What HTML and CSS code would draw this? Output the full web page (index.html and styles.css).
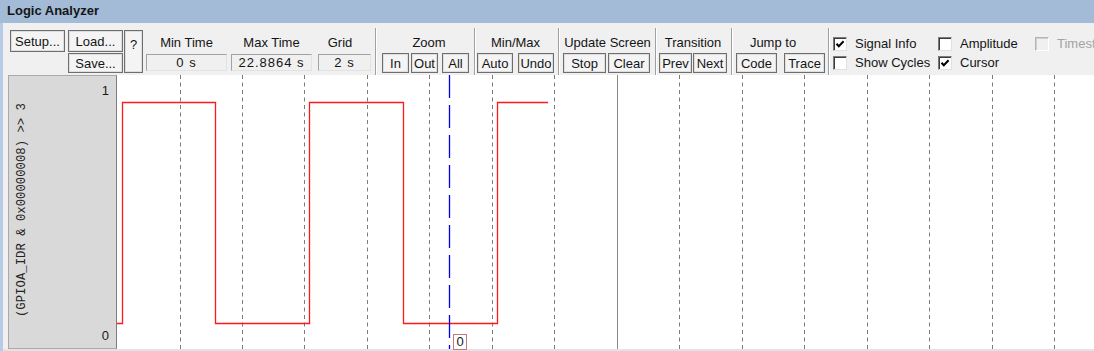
FILE: index.html
```html
<!DOCTYPE html>
<html>
<head>
<meta charset="utf-8">
<title>Logic Analyzer</title>
<link rel="stylesheet" href="styles.css">
</head>
<body>
<div class="window">
  <div class="titlebar">Logic Analyzer</div>
  <div class="frame">
    <div class="toolbar">
      <div class="file-group">
        <button class="btn setup">Setup...</button>
        <button class="btn load">Load...</button>
        <button class="btn save">Save...</button>
        <button class="btn help">?</button>
      </div>
      <div class="field f-min"><div class="lbl">Min Time</div><div class="val">0 s</div></div>
      <div class="field f-max"><div class="lbl">Max Time</div><div class="val">22.8864 s</div></div>
      <div class="field f-grid"><div class="lbl">Grid</div><div class="val">2 s</div></div>
      <div class="sep s1"></div>
      <div class="group g-zoom">
        <div class="lbl">Zoom</div>
        <div class="btns"><button class="btn b-in">In</button><button class="btn b-out">Out</button><button class="btn b-all">All</button></div>
      </div>
      <div class="sep s2"></div>
      <div class="group g-minmax">
        <div class="lbl">Min/Max</div>
        <div class="btns"><button class="btn b-auto">Auto</button><button class="btn b-undo">Undo</button></div>
      </div>
      <div class="sep s3"></div>
      <div class="group g-update">
        <div class="lbl">Update Screen</div>
        <div class="btns"><button class="btn b-stop">Stop</button><button class="btn b-clear">Clear</button></div>
      </div>
      <div class="sep s4"></div>
      <div class="group g-trans">
        <div class="lbl">Transition</div>
        <div class="btns"><button class="btn b-prev">Prev</button><button class="btn b-next">Next</button></div>
      </div>
      <div class="sep s5"></div>
      <div class="group g-jump">
        <div class="lbl">Jump to</div>
        <div class="btns"><button class="btn b-code">Code</button><button class="btn b-trace">Trace</button></div>
      </div>
      <div class="sep s6"></div>
      <div class="checks">
        <label class="chk"><span class="box"><svg viewBox="0 0 12 12" width="12" height="12"><path d="M2.5 5.8 L4.8 8.3 L9.6 3.2" fill="none" stroke="#000" stroke-width="2"/></svg></span>Signal Info</label>
        <label class="chk"><span class="box"></span>Amplitude</label>
        <label class="chk disabled"><span class="box"></span>Timestamps</label>
        <label class="chk"><span class="box"></span>Show Cycles</label>
        <label class="chk"><span class="box"><svg viewBox="0 0 12 12" width="12" height="12"><path d="M2.5 5.8 L4.8 8.3 L9.6 3.2" fill="none" stroke="#000" stroke-width="2"/></svg></span>Cursor</label>
      </div>
    </div>
    <div class="plotrow">
      <div class="signal">
        <div class="signame">(GPIOA_IDR &amp; 0x00000008) &gt;&gt; 3</div>
        <div class="levels"><span>1</span><span>0</span></div>
      </div>
      <div class="plot">
        <svg class="wave" width="977" height="274" viewBox="0 0 977 274">
          <path d="M63.5 0V274M125.5 0V274M187.5 0V274M250.5 0V274M312.5 0V274M375.5 0V274M437.5 0V274M562.5 0V274M625.5 0V274M687.5 0V274M750.5 0V274M812.5 0V274M875.5 0V274M937.5 0V274" stroke="#7c7c7c" stroke-width="1" stroke-dasharray="4 3.5" fill="none"/>
          <path d="M500.5 0V274" stroke="#8a8a8a" stroke-width="1" fill="none"/>
          <path d="M0 248.5H5.5V27.5H98.5V248.5H192.5V27.5H286.5V248.5H380.5V27.5H431" stroke="#ff1a1a" stroke-width="1.3" fill="none"/>
          <path d="M332.5 0V274" stroke="#0000ee" stroke-width="1.3" stroke-dasharray="23 7" fill="none"/>
        </svg>
        <div class="cursor-tag">0</div>
      </div>
    </div>
  </div>
</div>
</body>
</html>
```
FILE: styles.css
```css
html, body {
  margin: 0;
  padding: 0;
}
body {
  width: 1094px;
  height: 351px;
  overflow: hidden;
  font-family: "Liberation Sans", Arial, sans-serif;
  font-size: 13px;
  color: #141414;
  background: #f0f0f0;
}
.titlebar {
  height: 23px;
  box-sizing: border-box;
  padding-left: 7px;
  background: #a3bbd6;
  font-weight: bold;
  line-height: 22px;
  color: #151515;
}
.frame {
  border-left: 3px solid #b6cce6;
  background: #f0f0f0;
}
.toolbar {
  display: flex;
  height: 52px;
  box-sizing: border-box;
  padding: 7px 0 0 7px;
  white-space: nowrap;
  overflow: hidden;
}
.toolbar > * { flex-shrink: 0; }
.btn {
  font: inherit;
  color: #141414;
  background: #f4f4f4;
  border: 1px solid #6e6e6e;
  box-shadow: inset 0 0 0 1px #dedede;
  padding: 0;
  margin: 0;
  height: 20px;
  box-sizing: border-box;
  display: flex;
  align-items: center;
  justify-content: center;
  line-height: 1;
  white-space: nowrap;
  flex-shrink: 0;
}
.file-group {
  display: grid;
  grid-template-columns: 58px 56px 19px;
  grid-template-rows: 22px 20px;
  row-gap: 1px;
}
.file-group .btn { height: auto; }
.setup { grid-column: 1; grid-row: 1; width: 55px; }
.load { grid-column: 2; grid-row: 1; width: 55px; }
.save { grid-column: 2; grid-row: 2; width: 55px; }
.help {
  grid-column: 3;
  grid-row: 1 / span 2;
  align-items: flex-start;
  padding-top: 7px;
}
.field, .group {
  display: flex;
  flex-direction: column;
}
.lbl {
  height: 23px;
  box-sizing: border-box;
  padding-top: 2px;
  line-height: 22px;
  text-align: center;
  white-space: nowrap;
}
.val {
  margin-top: 1px;
  height: 17px;
  box-sizing: border-box;
  border: 1px solid;
  border-color: #a2a2a2 #e2e2e2 #e2e2e2 #a2a2a2;
  text-align: center;
  line-height: 15px;
  letter-spacing: 1px;
}
.f-min { margin-left: 3px; width: 81px; }
.f-max { margin-left: 4px; width: 81px; }
.f-grid { margin-left: 6px; width: 53px; }
.f-grid .lbl { padding-right: 9px; }

.sep {
  width: 2px;
  margin-top: -2px;
  box-sizing: border-box;
  border-left: 1px solid #a0a0a0;
  border-right: 1px solid #ffffff;
}
.s1 { margin-left: 4px; }
.s2 { margin-left: 5px; }
.s3 { margin-left: 4px; }
.s4 { margin-left: 3px; }
.s5 { margin-left: 4px; }
.s6 { margin-left: 3px; }

.btns { display: flex; }

.g-zoom { margin-left: 5px; }
.g-zoom .lbl { padding-left: 7px; }
.b-in { width: 27px; }
.b-out { width: 27px; margin-left: 2px; }
.b-all { width: 27px; margin-left: 4px; }

.g-minmax { margin-left: 1px; }
.b-auto { width: 36px; }
.b-undo { width: 36px; margin-left: 5px; }

.g-update { margin-left: 3px; width: 89px; }
.b-stop { width: 43px; }
.b-clear { width: 42px; margin-left: 2px; }

.g-trans { margin-left: 2px; }
.b-prev { width: 33px; }
.b-next { width: 34px; margin-left: 1px; }

.g-jump { margin-left: 3px; }
.g-jump .lbl { padding-right: 15px; }
.b-code { width: 41px; }
.b-trace { width: 41px; margin-left: 7px; }

.checks {
  margin-left: 3px;
  padding-top: 5px;
  display: grid;
  grid-template-columns: 105px 97px 80px;
  grid-template-rows: 17px 17px;
  row-gap: 2px;
}
.chk {
  display: flex;
  align-items: center;
  gap: 8px;
  white-space: nowrap;
}
.box {
  width: 14px;
  height: 14px;
  flex-shrink: 0;
  box-sizing: border-box;
  background: #ffffff;
  border: 1px solid;
  border-color: #7a7a7a #e0e0e0 #e0e0e0 #7a7a7a;
  box-shadow: inset 1px 1px 0 #3c3c3c;
  display: flex;
  align-items: center;
  justify-content: center;
}
.box svg { display: block; }
.chk.disabled { color: #a3a3a3; }
.chk.disabled .box {
  background: #f0f0f0;
  border-color: #b4b4b4 #ffffff #ffffff #b4b4b4;
  box-shadow: inset 1px 1px 0 #cfcfcf;
}

.plotrow {
  display: flex;
  height: 274px;
  padding-left: 5px;
  border-bottom: 2px solid #e3e3e3;
}
.signal {
  width: 109px;
  flex-shrink: 0;
  box-sizing: border-box;
  background: #d9d9d9;
  border: 1px solid #a9a9a9;
  border-right-color: #7d7d7d;
  display: flex;
}
.signame {
  writing-mode: vertical-rl;
  transform: rotate(180deg);
  font-family: "Liberation Mono", "Courier New", monospace;
  font-size: 12.3px;
  line-height: 14px;
  align-self: flex-end;
  margin-bottom: 31px;
  margin-left: 6px;
  white-space: nowrap;
  color: #222222;
}
.levels {
  flex: 1;
  display: flex;
  flex-direction: column;
  justify-content: space-between;
  align-items: flex-end;
  padding: 7px 7px 5px 0;
  line-height: 15px;
  color: #1a1a1a;
}
.plot {
  position: relative;
  flex: 1;
  background: #ffffff;
}
.wave { display: block; }
.cursor-tag {
  position: absolute;
  left: 336px;
  top: 259px;
  width: 14px;
  height: 16px;
  box-sizing: border-box;
  border: 1px solid #c27a7a;
  background: #ffffff;
  font-size: 13px;
  line-height: 14px;
  text-align: center;
  color: #1a1a1a;
}
```
